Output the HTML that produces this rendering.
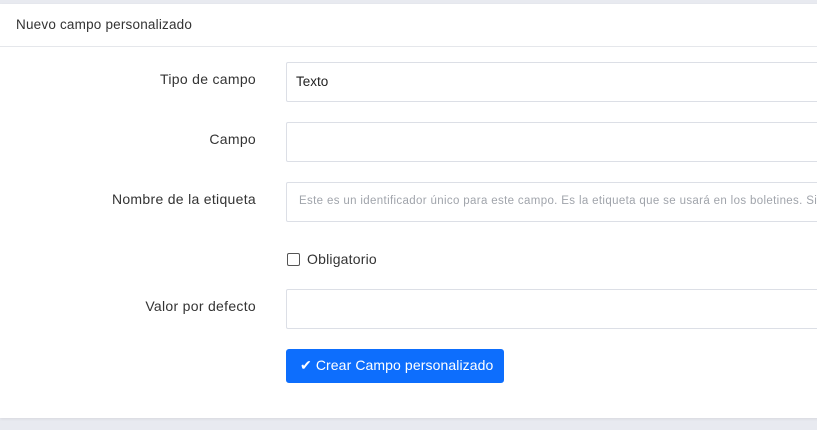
<!DOCTYPE html>
<html><head><style>
body{margin:0;width:817px;height:430px;background:#e8eaf0;font-family:"Liberation Sans",sans-serif;overflow:hidden;position:relative;color:#333}
.card{position:absolute;left:0;top:4px;width:830px;height:414px;background:#fff;box-shadow:0 1px 3px rgba(0,0,0,.08)}
.hdr{position:absolute;left:0;top:0;width:100%;height:42px;border-bottom:1px solid #e5e7eb;}
.hdr span{position:absolute;left:16px;top:13px;font-size:13.5px;color:#333;letter-spacing:.2px}
.lbl{position:absolute;right:561px;font-size:14px;color:#333;white-space:nowrap;letter-spacing:.3px}
.inp{position:absolute;left:286px;width:560px;height:38px;border:1px solid #dcdfe6;border-radius:2px;box-sizing:border-box;background:#fff}
.inp span{position:absolute;left:9px;top:11px;font-size:13.5px;color:#222;white-space:nowrap}
.inp span.ph{font-size:11.5px;color:#a0a4ab;left:12px;top:12px;letter-spacing:.35px}
.chk{position:absolute;left:287px;top:253px;width:11px;height:11px;border:1px solid #555;border-radius:2px}
.btn{position:absolute;left:286px;top:349px;width:218px;height:34px;background:#0d6efd;border-radius:3px;color:#fff;font-size:14px}
</style></head><body>
<div class="card">
<div class="hdr"><span>Nuevo campo personalizado</span></div>
</div>
<div class="lbl" style="top:71px">Tipo de campo</div>
<div class="inp" style="top:62px;height:40px"><span>Texto</span></div>
<div class="lbl" style="top:131px">Campo</div>
<div class="inp" style="top:122px;height:40px"></div>
<div class="lbl" style="top:191px">Nombre de la etiqueta</div>
<div class="inp" style="top:182px;height:40px"><span class="ph">Este es un identificador único para este campo. Es la etiqueta que se usará en los boletines. Si</span></div>
<div class="chk"></div>
<div style="position:absolute;left:307px;top:251px;font-size:14px;color:#333;letter-spacing:.2px">Obligatorio</div>
<div class="lbl" style="top:298px">Valor por defecto</div>
<div class="inp" style="top:289px;height:40px"></div>
<div class="btn"><span style="position:absolute;left:14px;top:8px;letter-spacing:.1px">✔ Crear Campo personalizado</span></div>
</body></html>
